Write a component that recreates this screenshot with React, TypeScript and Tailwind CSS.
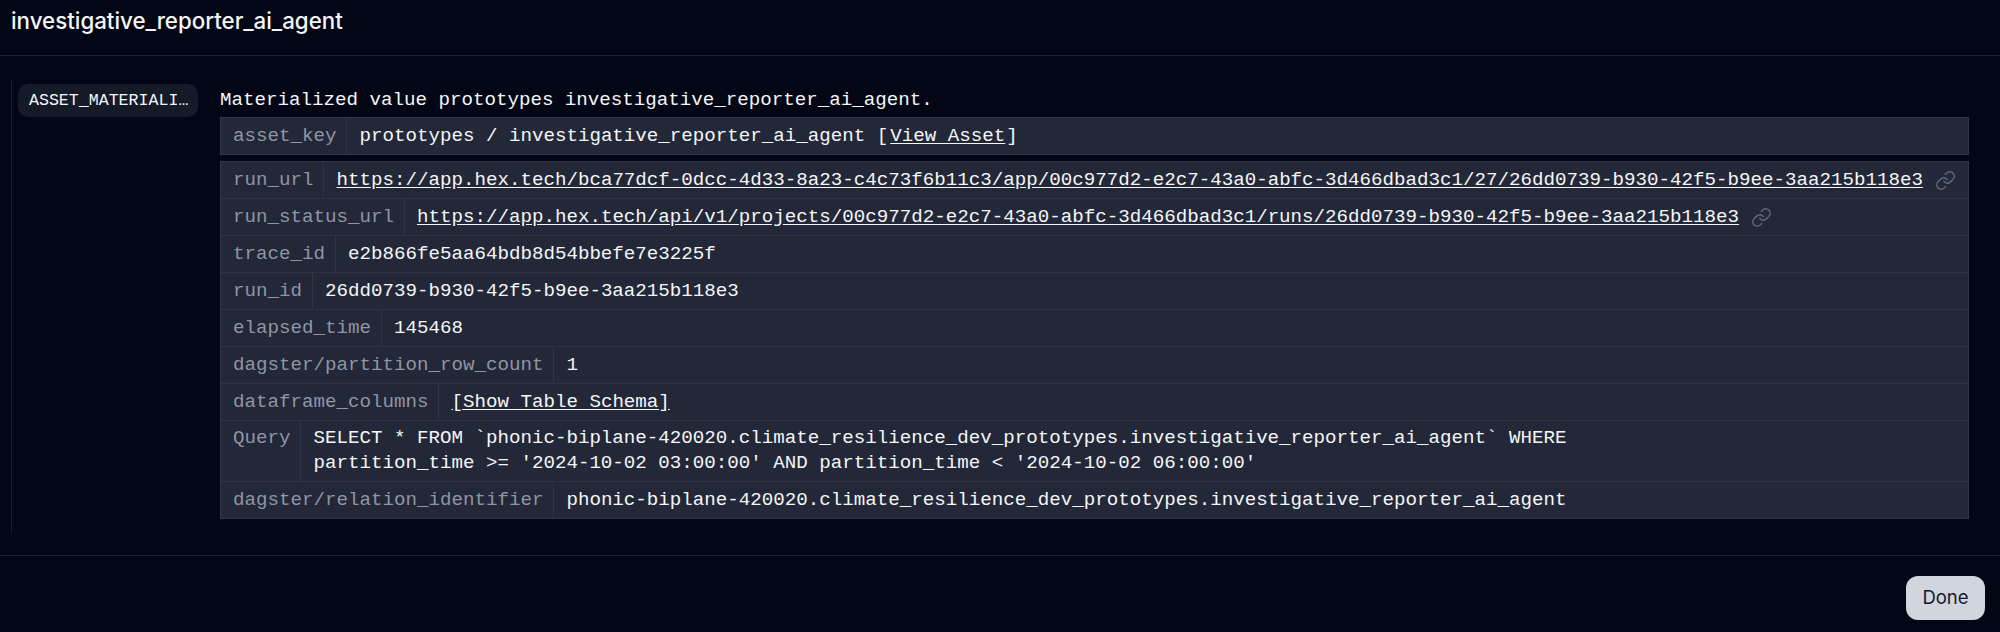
import { Link } from "lucide-react"
import type { ReactNode } from "react"

const mono = "font-['Liberation_Mono',monospace] text-[19.17px] leading-[25px]"

function Row({ label, children, last, tight }: { label: string; children: ReactNode; last?: boolean; tight?: boolean }) {
  const py = tight ? "py-[5px]" : "py-[5.5px]"
  return (
    <div className={`flex ${last ? "" : "border-b border-[#2f3443]"}`}>
      <div className={`pl-3 pr-[10px] ${py} text-[#8f95a3] border-r border-[#2f3443] whitespace-nowrap`}>{label}</div>
      <div className={`px-3 ${py} text-[#f5f6f8] flex items-center gap-3 min-w-0`}>{children}</div>
    </div>
  )
}

function Url({ href }: { href: string }) {
  return (
    <>
      <a href="#" className="underline underline-offset-2">{href}</a>
      <Link size={21} strokeWidth={1.8} className="text-[#5c6478] shrink-0" />
    </>
  )
}

export default function App() {
  return (
    <div className="w-[2000px] h-[632px] bg-[#030615] flex flex-col overflow-hidden">
      <div className="h-[56px] border-b border-[#1b1f2d] px-[11px] pt-[7px] font-['Inter',sans-serif] text-[22.3px] leading-[28px] font-medium text-[#f5f6f8]">
        investigative_reporter_ai_agent
      </div>

      <div className="flex-1 px-[11px] pt-[23px]">
        <div className={`flex border-l border-[#1b1f2d] pl-[6px] pb-[14px] ${mono}`}>
          <div className="w-[180px] h-[33px] mt-[5px] shrink-0 rounded-[10px] bg-[#151a28] text-[#f5f6f8] text-[16.6px] leading-[33px] pl-[11px] pr-[8px] truncate">
            ASSET_MATERIALIZATION
          </div>
          <div className="ml-[22px] w-[1749px] pt-[9px]">
            <div className="text-[#f5f6f8] h-[25px] mb-1">Materialized value prototypes investigative_reporter_ai_agent.</div>
            <div className="border border-[#323747] bg-[#232838]">
              <Row label="asset_key" last>
                <span>
                  prototypes / investigative_reporter_ai_agent [<a href="#" className="underline underline-offset-2 ml-[2px] mr-[1px]">View Asset</a>]
                </span>
              </Row>
            </div>
            <div className="mt-[6px] border border-[#323747] bg-[#232838]">
              <Row label="run_url">
                <Url href="https://app.hex.tech/bca77dcf-0dcc-4d33-8a23-c4c73f6b11c3/app/00c977d2-e2c7-43a0-abfc-3d466dbad3c1/27/26dd0739-b930-42f5-b9ee-3aa215b118e3" />
              </Row>
              <Row label="run_status_url">
                <Url href="https://app.hex.tech/api/v1/projects/00c977d2-e2c7-43a0-abfc-3d466dbad3c1/runs/26dd0739-b930-42f5-b9ee-3aa215b118e3" />
              </Row>
              <Row label="trace_id">e2b866fe5aa64bdb8d54bbefe7e3225f</Row>
              <Row label="run_id">26dd0739-b930-42f5-b9ee-3aa215b118e3</Row>
              <Row label="elapsed_time">145468</Row>
              <Row label="dagster/partition_row_count">1</Row>
              <Row label="dataframe_columns">
                <a href="#" className="underline underline-offset-2">[Show Table Schema]</a>
              </Row>
              <Row label="Query" tight>
                <span>
                  SELECT * FROM `phonic-biplane-420020.climate_resilience_dev_prototypes.investigative_reporter_ai_agent` WHERE
                  <br />
                  partition_time &gt;= '2024-10-02 03:00:00' AND partition_time &lt; '2024-10-02 06:00:00'
                </span>
              </Row>
              <Row label="dagster/relation_identifier" last>
                phonic-biplane-420020.climate_resilience_dev_prototypes.investigative_reporter_ai_agent
              </Row>
            </div>
          </div>
        </div>
      </div>

      <div className="h-[77px] border-t border-[#1b1f2d] flex items-end justify-end pr-[15px] pb-[12px]">
        <button className="w-[79px] h-[44px] rounded-[12px] bg-[#d1d5de] text-[#14182a] font-['Inter',sans-serif] text-[18.5px]">
          Done
        </button>
      </div>
    </div>
  )
}
